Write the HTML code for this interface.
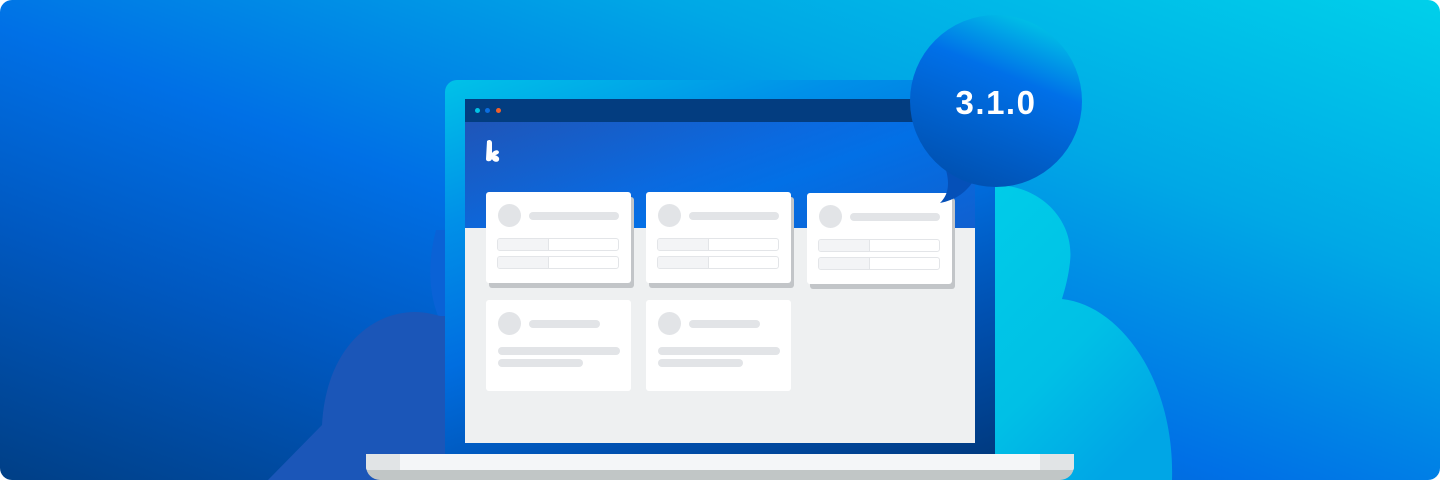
<!DOCTYPE html>
<html><head><meta charset="utf-8"><style>
html,body{margin:0;padding:0;background:#fff;}
.wrap{position:relative;width:1440px;height:480px;overflow:hidden;border-radius:12px;
background:linear-gradient(200deg,#00d0ea 0%,#00a8e6 28%,#0070e6 55%,#0058c0 75%,#003f86 100%);}
.abs{position:absolute;}
.card{position:absolute;background:#fff;border-radius:3px;width:145px;height:91px;}
.card.sh{box-shadow:3px 5px 0 #c2c5c8;}
.av{position:absolute;left:12px;top:12px;width:23px;height:23px;border-radius:50%;background:#e2e4e7;}
.ln{position:absolute;height:8px;border-radius:4px;background:#e2e4e7;}
.fld{position:absolute;left:11px;width:122px;height:13px;border:1px solid #e3e5e8;border-radius:3px;background:#fff;box-sizing:border-box;overflow:hidden;}
.fld:before{content:"";position:absolute;left:0;top:0;bottom:0;width:50px;background:#f3f4f6;border-right:1px solid #e3e5e8;}
</style></head><body>
<div class="wrap">
<svg class="abs" style="left:0;top:0" width="1440" height="480">
  <defs><linearGradient id="cg" x1="0" y1="0" x2="0.6" y2="1"><stop offset="0" stop-color="#00cce8"/><stop offset="0.6" stop-color="#00c0e6"/><stop offset="1" stop-color="#00a6e6"/></linearGradient></defs>
  <path d="M436,230 C428,260 428,290 438,316 L445,316 L445,230 Z" fill="#0a62d6"/>
  <path d="M268,480 L322,425 C326,350 370,312 415,312 C425,312 432,314 440,316 L445,316 L445,480 Z" fill="#1b56b8"/>
  <path d="M995,185 C1040,185 1075,220 1070,262 C1068,280 1064,292 1062,299 C1120,305 1175,380 1172,480 L995,480 Z" fill="url(#cg)"/>
</svg>
<div class="abs" style="left:445px;top:80px;width:550px;height:376px;border-radius:12px 12px 0 0;background:linear-gradient(160deg,#00c2e8 0%,#0090e8 25%,#006ee0 50%,#0050b0 75%,#003a80 100%);"></div>
<div class="abs" style="left:465px;top:99px;width:510px;height:344px;background:#eef0f1;overflow:hidden;">
  <div class="abs" style="left:0;top:0;width:510px;height:23px;background:#033d80;"></div>
  <div class="abs" style="left:10px;top:9px;width:5px;height:5px;border-radius:50%;background:#00c3e6;"></div>
  <div class="abs" style="left:20px;top:9px;width:5px;height:5px;border-radius:50%;background:#0a6ee0;"></div>
  <div class="abs" style="left:31px;top:9px;width:5px;height:5px;border-radius:50%;background:#f0602a;"></div>
  <div class="abs" style="left:0;top:23px;width:510px;height:106px;background:linear-gradient(160deg,#1f55b8 0%,#0a6ae0 45%,#0270e6 60%,#1060d0 100%);"></div>
  <svg class="abs" style="left:19px;top:40px" width="18" height="24" viewBox="0 0 18 24">
    <path d="M3,2 C5,0 8,1 8,4 L8,14 C10,11 14,10 15,13 C15,15 12,16 11,16 C13,17 16,18 15,21 C14,24 9,23 8,20 C7,23 2,23 2,20 Z" fill="#fff"/>
  </svg>
</div>
<div class="card sh" style="left:486px;top:192px;"><div class="av"></div><div class="ln" style="left:43px;top:20px;width:90px"></div><div class="fld" style="top:46px"></div><div class="fld" style="top:64px"></div></div>
<div class="card sh" style="left:646px;top:192px;"><div class="av"></div><div class="ln" style="left:43px;top:20px;width:90px"></div><div class="fld" style="top:46px"></div><div class="fld" style="top:64px"></div></div>
<div class="card sh" style="left:807px;top:193px;"><div class="av"></div><div class="ln" style="left:43px;top:20px;width:90px"></div><div class="fld" style="top:46px"></div><div class="fld" style="top:64px"></div></div>
<div class="card" style="left:486px;top:300px;"><div class="av"></div><div class="ln" style="left:43px;top:20px;width:71px"></div><div class="ln" style="left:12px;top:47px;width:122px"></div><div class="ln" style="left:12px;top:59px;width:85px"></div></div>
<div class="card" style="left:646px;top:300px;"><div class="av"></div><div class="ln" style="left:43px;top:20px;width:71px"></div><div class="ln" style="left:12px;top:47px;width:122px"></div><div class="ln" style="left:12px;top:59px;width:85px"></div></div>
<div class="abs" style="left:366px;top:454px;width:708px;height:26px;border-radius:0 0 14px 14px;background:#c1c6c6;overflow:hidden;">
  <div class="abs" style="left:0;top:0;width:708px;height:16px;background:#f4f6f8;"></div>
  <div class="abs" style="left:0;top:0;width:34px;height:16px;background:#e1e4e6;"></div>
  <div class="abs" style="left:674px;top:0;width:34px;height:16px;background:#e1e4e6;"></div>
</div>
<svg class="abs" style="left:900px;top:5px" width="200" height="210">
  <defs><linearGradient id="bg" x1="0.7" y1="0" x2="0.3" y2="1"><stop offset="0" stop-color="#00c6e6"/><stop offset="0.35" stop-color="#0070e8"/><stop offset="1" stop-color="#0050b0"/></linearGradient></defs>
  <path d="M46,165 C50,180 48,190 40,198 C55,195 65,188 72,178 Z" fill="#0550b8"/>
  <circle cx="96" cy="96" r="86" fill="url(#bg)"/>
</svg>
<div class="abs" style="left:910px;top:84px;width:172px;text-align:center;color:#fff;font:bold 33px 'Liberation Sans',sans-serif;letter-spacing:1.5px;line-height:38px;">3.1.0</div>
</div>
</body></html>
